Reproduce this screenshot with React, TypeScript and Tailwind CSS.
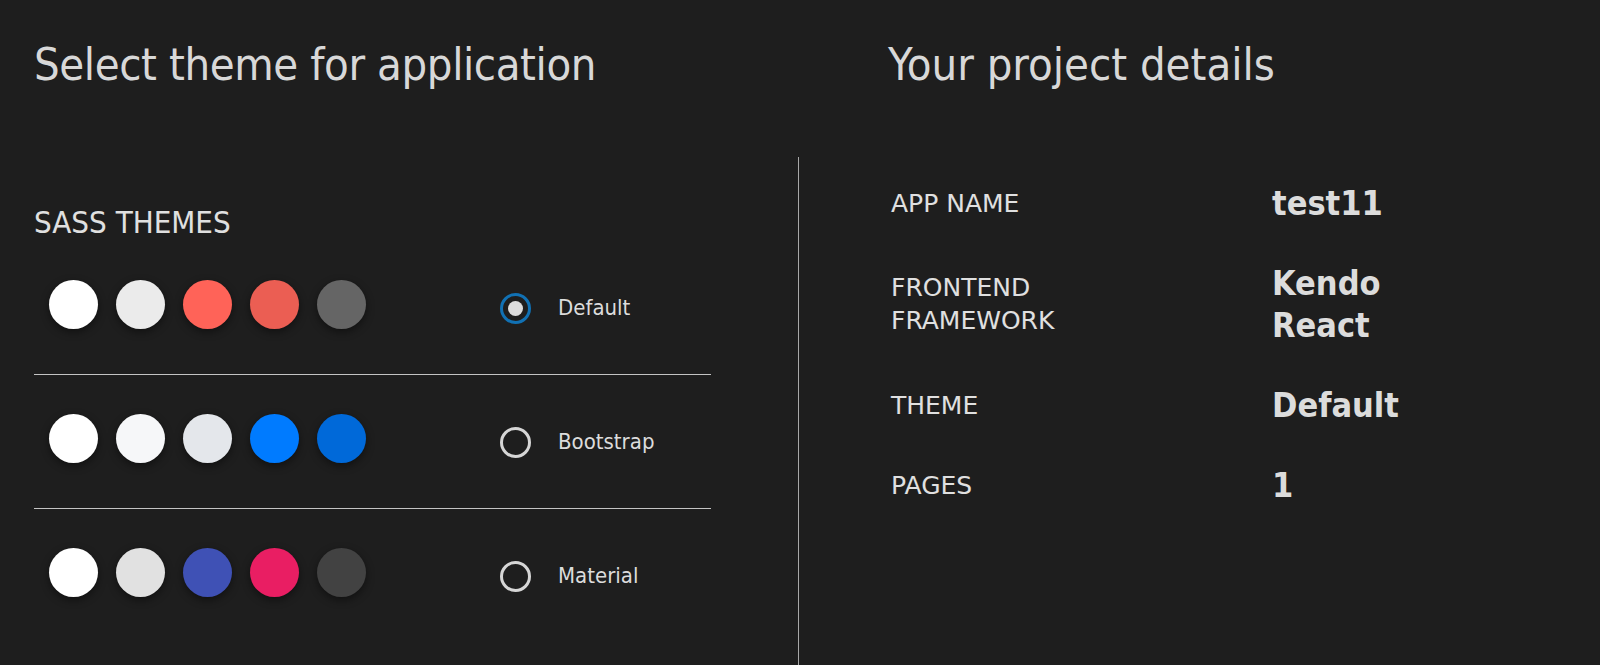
import React from "react";

type Theme = {
  name: string;
  swatches: string[];
  checked?: boolean;
};

const themes: Theme[] = [
  {
    name: "Default",
    swatches: ["bg-[#ffffff]", "bg-[#ebebeb]", "bg-[#ff6358]", "bg-[#eb5e53]", "bg-[#656565]"],
    checked: true,
  },
  {
    name: "Bootstrap",
    swatches: ["bg-[#ffffff]", "bg-[#f6f7f9]", "bg-[#e4e7eb]", "bg-[#007bff]", "bg-[#0069d9]"],
  },
  {
    name: "Material",
    swatches: ["bg-[#ffffff]", "bg-[#e1e1e1]", "bg-[#3f51b5]", "bg-[#e91e63]", "bg-[#424242]"],
  },
];

const details = [
  { label: ["APP NAME"], value: ["test11"] },
  { label: ["FRONTEND", "FRAMEWORK"], value: ["Kendo", "React"] },
  { label: ["THEME"], value: ["Default"] },
  { label: ["PAGES"], value: ["1"] },
];

const Radio = ({ checked }: { checked?: boolean }) =>
  checked ? (
    <span className="w-[31px] h-[31px] rounded-full border-[3px] border-[#1171b4] flex items-center justify-center">
      <span className="w-[15px] h-[15px] rounded-full bg-[#dcdcdc]" />
    </span>
  ) : (
    <span className="w-[31px] h-[31px] rounded-full border-[3px] border-[#d6d6d6]" />
  );

const ThemeRow = ({ theme, last }: { theme: Theme; last?: boolean }) => (
  <div
    className={`flex items-center pl-[15px] pt-[39px] pb-[45px] ${
      last ? "" : "border-b border-[#c4c4c4]"
    }`}
  >
    <div className="flex gap-[18px]">
      {theme.swatches.map((c, i) => (
        <span
          key={i}
          className={`w-[49px] h-[49px] rounded-full shadow-[0_3px_8px_rgba(0,0,0,0.45)] ${c}`}
        />
      ))}
    </div>
    <div className="flex items-center ml-[134px] mt-[7px]">
      <Radio checked={theme.checked} />
      <span className="ml-[27px] text-[22px] leading-none text-[#dcdcdc]">
        {theme.name}
      </span>
    </div>
  </div>
);

export default function App() {
  return (
    <div
      className="w-full h-[665px] bg-[#1e1e1e] flex overflow-hidden text-[#dcdcdc]"
      style={{ fontFamily: '"DejaVu Sans Condensed", "DejaVu Sans", sans-serif' }}
    >
      <div className="w-[798px] shrink-0 pl-[34px] flex flex-col">
        <h1 className="pt-[42px] text-[45px] leading-none font-normal tracking-[-0.4px] text-[#d8d8d8]">
          Select theme for application
        </h1>
        <p className="mt-[120px] text-[31px] leading-none text-[#e0e0e0]">SASS THEMES</p>
        <div className="mt-[3px] w-[677px]">
          {themes.map((t, i) => (
            <ThemeRow key={t.name} theme={t} last={i === themes.length - 1} />
          ))}
        </div>
      </div>

      <div className="flex-1 flex flex-col">
        <h1 className="pt-[42px] pl-[90px] text-[45px] leading-none font-normal text-[#d8d8d8]">
          Your project details
        </h1>
        <div className="mt-[70px] flex-1 border-l border-[#a8a8a8] pl-[92px] pt-[6px]">
          {details.map((d) => (
            <div key={d.label[0]} className="grid grid-cols-[381px_1fr] items-center py-[19px]">
              <div className="font-['DejaVu_Sans',sans-serif] text-[25px] leading-[33px] text-[#e0e0e0]">
                {d.label.map((l) => (
                  <div key={l}>{l}</div>
                ))}
              </div>
              <div className="text-[34px] leading-[42px] font-bold text-[#dcdcdc]">
                {d.value.map((v) => (
                  <div key={v}>{v}</div>
                ))}
              </div>
            </div>
          ))}
        </div>
      </div>
    </div>
  );
}
